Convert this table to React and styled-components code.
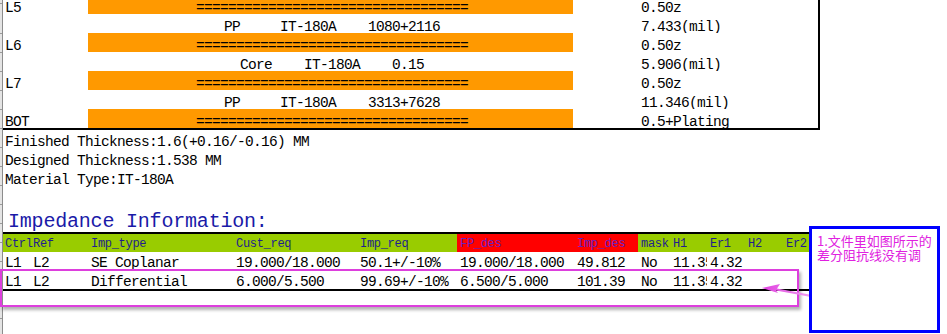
import React from "react";
import styled, { createGlobalStyle } from "styled-components";

const MONO = `"Liberation Mono", "DejaVu Sans Mono", monospace`;

const GlobalStyle = createGlobalStyle`
  html, body {
    margin: 0;
    padding: 0;
    background: #fff;
  }
  body {
    width: 947px;
    height: 334px;
    overflow: hidden;
  }
`;

const Sheet = styled.div`
  position: relative;
  display: flex;
  width: 947px;
  height: 334px;
  overflow: hidden;
  font-family: ${MONO};
  font-size: 14.5px;
  letter-spacing: -0.7px;
  color: #000;
`;

const RowHeads = styled.div`
  flex: none;
  width: 2px;
  border-right: 1px solid #8c8c8c;
  background: repeating-linear-gradient(to bottom, #e4e4e4 0 18px, #9a9a9a 18px 19px);
  background-position: 0 15px;
`;

const Content = styled.div`
  display: flex;
  flex-direction: column;
  width: 817px;
`;

/* ---------- stack-up ---------- */

const Stack = styled.div`
  margin-top: -5px;
  border-right: 2px solid #000;
  border-bottom: 2px solid #000;
`;

const StackRow = styled.div`
  display: grid;
  grid-template-columns: 85px 485px 65px 1fr;
  height: 19px;
`;

const Cell = styled.div`
  height: 19px;
  box-sizing: border-box;
  padding: 4px 0 0 ${(p) => p.$pad ?? 3}px;
  line-height: 19px;
  white-space: pre;
  overflow: hidden;
  text-align: ${(p) => (p.$center ? "center" : "left")};
  background: ${(p) => (p.$orange ? "#ff9900" : "transparent")};
`;

/* ---------- notes ---------- */

const InfoLine = styled.div`
  height: 19px;
  box-sizing: border-box;
  padding: 3px 0 0 2px;
  line-height: 19px;
  white-space: pre;
`;

const Spacer = styled.div`
  height: 19px;
`;

const Title = styled.div`
  height: 26px;
  box-sizing: border-box;
  padding: 3px 0 0 5px;
  line-height: 26px;
  font-size: 20px;
  letter-spacing: -0.2px;
  color: #1a1aa8;
`;

/* ---------- impedance table ---------- */

const ImpTable = styled.div`
  border-top: 2px solid #000;
  border-bottom: 2px solid #000;
`;

const ImpRow = styled.div`
  display: grid;
  grid-template-columns: 27px 58px 145px 124px 100px 117px 64px 32px 37px 38px 38px 1fr;
  height: ${(p) => p.$h}px;
  background: ${(p) => (p.$header ? "#99cc00" : "#fff")};
  font-size: ${(p) => (p.$header ? "12px" : "14.5px")};
  letter-spacing: ${(p) => (p.$header ? "-0.3px" : "-0.7px")};
  color: ${(p) => (p.$header ? "#1f1f8c" : "#000")};
`;

const ImpCell = styled.div`
  box-sizing: border-box;
  padding: ${(p) => p.$top}px 0 0 ${(p) => (p.$first ? 2 : 3)}px;
  line-height: ${(p) => p.$lh}px;
  white-space: pre;
  overflow: ${(p) => (p.$clip ? "hidden" : "visible")};
  background: ${(p) => (p.$red ? "#ff0000" : "transparent")};
  color: ${(p) => (p.$red ? "#6a1fc0" : "inherit")};
`;

/* ---------- annotations ---------- */

const Highlight = styled.div`
  position: absolute;
  left: 0;
  top: 269px;
  width: 799px;
  height: 38px;
  box-sizing: border-box;
  border: 2.5px solid #dd3fdd;
  box-shadow: 2px 3px 3px rgba(0, 0, 0, 0.3);
  pointer-events: none;
`;

const Arrow = styled.svg`
  position: absolute;
  left: 756px;
  top: 279px;
`;

const Callout = styled.div`
  position: absolute;
  left: 809px;
  top: 226px;
  width: 131px;
  height: 107px;
  box-sizing: border-box;
  border: 3px solid #0000ff;
  background: #fff;
  padding: 5px 0 0 5px;
  font-family: "Noto Sans CJK SC", sans-serif;
  font-size: 13px;
  line-height: 13.5px;
  letter-spacing: 0;
  color: #e020e0;
`;

const stack = [
  { layer: true, label: "L5", value: "0.50z" },
  { text: "PP     IT-180A    1080+2116", value: "7.433(mil)" },
  { layer: true, label: "L6", value: "0.50z" },
  { text: "Core    IT-180A    0.15", value: "5.906(mil)" },
  { layer: true, label: "L7", value: "0.50z" },
  { text: "PP     IT-180A    3313+7628", value: "11.346(mil)" },
  { layer: true, label: "BOT", value: "0.5+Plating" },
];

const header = ["Ctrl", "Ref", "Imp_type", "Cust_req", "Imp_req", "FP_des", "Imp_des", "mask", "H1", "Er1", "H2", "Er2"];

const rows = [
  ["L1", "L2", "SE Coplanar", "19.000/18.000", "50.1+/-10%", "19.000/18.000", "49.812", "No", "11.35", "4.32", "", ""],
  ["L1", "L2", "Differential", "6.000/5.500", "99.69+/-10%", "6.500/5.000", "101.39", "No", "11.35", "4.32", "", ""],
];

const EQUALS = "=".repeat(34);

export default function App() {
  return (
    <>
      <GlobalStyle />
      <Sheet>
        <RowHeads />
        <Content>
          <Stack>
            {stack.map((r, i) => (
              <StackRow key={i}>
                <Cell $pad={2}>{r.label || ""}</Cell>
                <Cell $center $orange={r.layer}>
                  {r.layer ? EQUALS : r.text}
                </Cell>
                <Cell />
                <Cell>{r.value}</Cell>
              </StackRow>
            ))}
          </Stack>

          <InfoLine>Finished Thickness:1.6(+0.16/-0.16) MM</InfoLine>
          <InfoLine>Designed Thickness:1.538 MM</InfoLine>
          <InfoLine>Material Type:IT-180A</InfoLine>
          <Spacer />
          <Title>Impedance Information:</Title>

          <ImpTable>
            <ImpRow $header $h={18}>
              {header.map((h, i) => (
                <ImpCell key={i} $first={i === 0} $top={3} $lh={15} $red={i === 5 || i === 6}>
                  {h}
                </ImpCell>
              ))}
            </ImpRow>
            {rows.map((r, ri) => (
              <ImpRow key={ri} $h={ri === 0 ? 18 : 19}>
                {r.map((c, i) => (
                  <ImpCell key={i} $clip $first={i === 0} $top={ri === 0 ? 2 : 3} $lh={ri === 0 ? 18 : 19}>
                    {c}
                  </ImpCell>
                ))}
              </ImpRow>
            ))}
          </ImpTable>
        </Content>

        <Highlight />
        <Arrow width="60" height="24" viewBox="0 0 60 24">
          <defs>
            <linearGradient id="arrowFill" x1="0" y1="0" x2="1" y2="0">
              <stop offset="0" stopColor="#e040e0" />
              <stop offset="1" stopColor="#f0a0f0" />
            </linearGradient>
          </defs>
          <path d="M6 9 L24 5 L21 9.5 L56 16 L55 18 L20 11.5 L22 14 Z" fill="url(#arrowFill)" />
        </Arrow>
        <Callout>
          1.文件里如图所示的
          <br />
          差分阻抗线没有调
        </Callout>
      </Sheet>
    </>
  );
}
